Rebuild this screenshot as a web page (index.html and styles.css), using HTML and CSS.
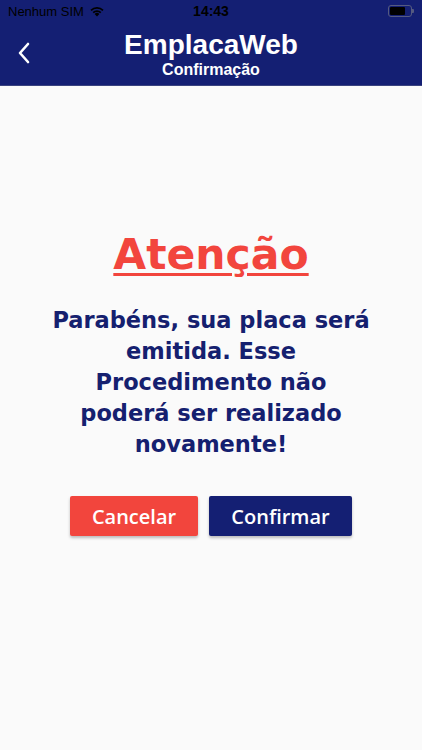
FILE: index.html
```html
<!DOCTYPE html>
<html lang="pt-BR">
<head>
    <meta charset="UTF-8">
    <meta name="viewport" content="width=device-width, initial-scale=1.0">
    <title>EmplacaWeb - Confirmação</title>
    <link rel="stylesheet" href="styles.css">
</head>
<body>
    <header class="topbar">
        <div class="status">
            <div class="status-left">
                <span>Nenhum SIM</span>
                <svg class="wifi" width="16" height="12" viewBox="0 0 16 12">
                    <path d="M8 11.5 L5.6 9 A3.4 3.4 0 0 1 10.4 9 Z" fill="#000"/>
                    <path d="M3.6 7 A6.3 6.3 0 0 1 12.4 7 L11.2 8.2 A4.6 4.6 0 0 0 4.8 8.2 Z" fill="#000"/>
                    <path d="M1.4 4.8 A9.4 9.4 0 0 1 14.6 4.8 L13.4 6 A7.7 7.7 0 0 0 2.6 6 Z" fill="#000"/>
                </svg>
            </div>
            <span class="clock">14:43</span>
            <div class="status-right">
                <span class="battery"><span class="battery-fill"></span></span>
            </div>
        </div>
        <nav class="navbar">
            <button class="back" type="button" aria-label="Voltar">
                <svg width="14" height="22" viewBox="0 0 14 22">
                    <path d="M11 2 L3 11 L11 20" fill="none" stroke="#fff" stroke-width="2.6" stroke-linecap="round" stroke-linejoin="round"/>
                </svg>
            </button>
            <div class="titles">
                <h1>EmplacaWeb</h1>
                <h2>Confirmação</h2>
            </div>
        </nav>
    </header>

    <main class="content">
        <h3 class="warning">Atenção</h3>
        <p class="message">Parabéns, sua placa será emitida. Esse Procedimento não poderá ser realizado novamente!</p>
        <div class="actions">
            <button type="button" class="btn btn-cancel">Cancelar</button>
            <button type="button" class="btn btn-confirm">Confirmar</button>
        </div>
    </main>
</body>
</html>
```

FILE: styles.css
```css
* { box-sizing: border-box; }
html, body { height: 100%; }
body { margin: 0; background: #fafafa; font-family: "DejaVu Sans", Arial, sans-serif; display: flex; flex-direction: column; }

.topbar { background: #141f73; height: 86px; border-bottom: 1px solid #3a437f; }
.status { height: 22px; display: flex; align-items: center; justify-content: space-between; padding: 0 10px 0 8px; font-family: "Liberation Sans", Arial, sans-serif; font-size: 13px; color: #000; position: relative; }
.status-left { display: flex; align-items: center; gap: 5px; }
.clock { position: absolute; left: 0; right: 0; text-align: center; font-weight: bold; font-size: 14px; }
.battery { width: 24px; height: 12px; border: 1px solid #555a80; border-radius: 3px; padding: 1px; display: flex; position: relative; }
.battery::after { content: ""; position: absolute; right: -3px; top: 3px; width: 2px; height: 4px; background: #555a80; border-radius: 0 1px 1px 0; }
.battery-fill { width: 15px; background: #000; border-radius: 1px; }

.navbar { height: 63px; display: flex; align-items: center; position: relative; }
.back { position: absolute; left: 17px; top: 20px; background: none; border: none; padding: 0; }
.titles { flex: 1; text-align: center; color: #fff; font-family: "Liberation Sans", Arial, sans-serif; padding-top: 2px; }
.titles h1 { margin: 0; font-size: 28px; line-height: 30px; font-weight: bold; }
.titles h2 { margin: 1px 0 0; font-size: 16px; line-height: 18px; font-weight: bold; }

.content { flex: 1; display: flex; flex-direction: column; align-items: center; padding: 143px 40px 0; }
.warning { margin: 0; color: #f2453d; font-size: 42.5px; line-height: 52px; font-weight: bold; text-decoration: underline; text-decoration-thickness: 3px; text-underline-offset: 4px; }
.message { margin: 24px 0 0; max-width: 326px; color: #15206f; font-size: 22.5px; line-height: 31px; font-weight: bold; text-align: center; }
.actions { display: flex; gap: 11px; margin-top: 36px; }
.btn { height: 40px; border: none; border-radius: 2px; color: #fff; font-family: "Open Sans", Arial, sans-serif; font-size: 20px; font-weight: 600; padding: 0; box-shadow: 0 2px 3px rgba(0,0,0,0.25); }
.btn-cancel { background: #f2453d; width: 128px; }
.btn-confirm { background: #141f73; width: 143px; }
```
